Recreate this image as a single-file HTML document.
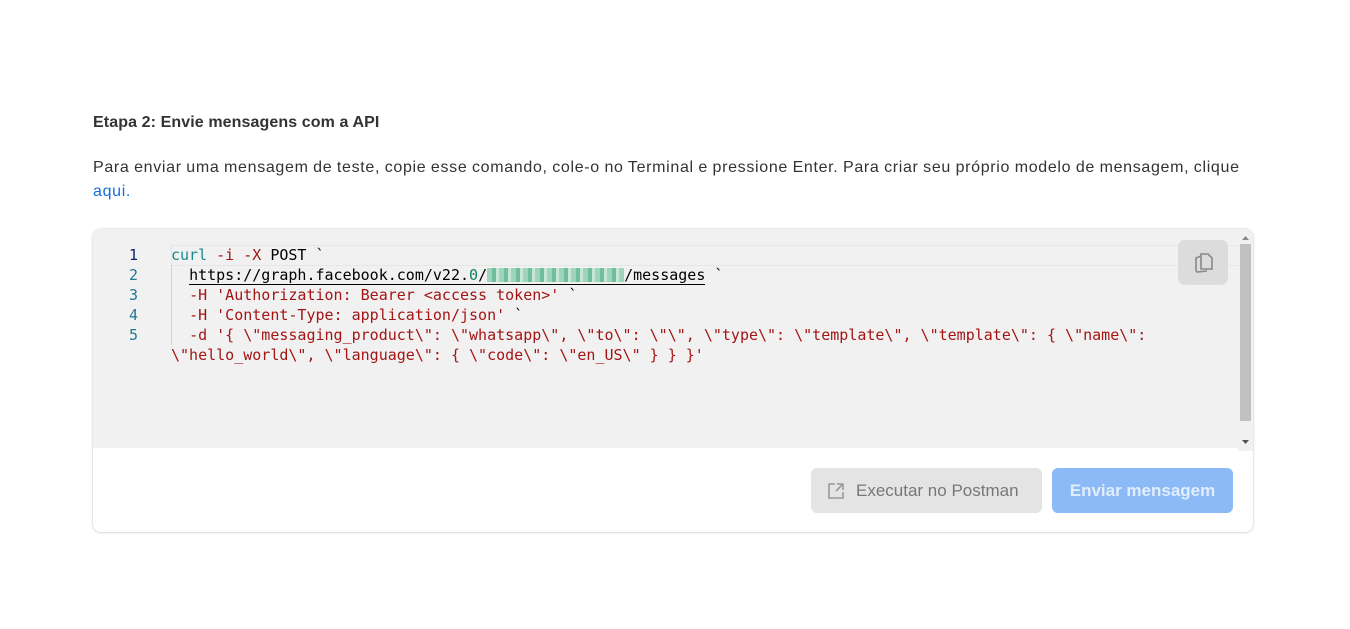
<!DOCTYPE html>
<html><head><meta charset="utf-8"><style>
body{margin:0;background:#fff;font-family:"Liberation Sans",Roboto,sans-serif;width:1350px;height:629px;overflow:hidden;position:relative}
.h{position:absolute;left:93px;top:114px;font-size:16px;font-weight:bold;color:#333;letter-spacing:0.1px}
.p{position:absolute;left:93px;top:156px;width:1220px;font-size:16px;line-height:24px;color:#333;letter-spacing:0.67px;word-spacing:-0.5px}
.p a{color:#1a6ed8;text-decoration:none}
.card{position:absolute;left:93px;top:229px;width:1160px;height:303px;border-radius:8px;box-shadow:0 0 2px rgba(0,0,0,.2),0 1px 3px rgba(0,0,0,.08);background:#fff;overflow:hidden}
.code{position:absolute;left:0;top:0;width:1145px;height:219px;background:#f1f1f1}
.hl{position:absolute;left:78px;top:16px;width:1067px;height:19px;border:1px solid #e6e6e6;border-right:none}
.ln{position:absolute;left:30px;top:16px;font:15px/20px "DejaVu Sans Mono",monospace;color:#237893;text-align:right;width:15px}
.src{position:absolute;left:78px;top:16px;font:15px/20px "DejaVu Sans Mono",monospace;color:#000;white-space:pre}
.g{color:#098658}.r{color:#a31515}.t{color:#1b8a8a}
.u{border-bottom:1px solid #000}
.tok{display:inline-block;width:137px;height:14px;vertical-align:-2px;background:repeating-linear-gradient(90deg,#9fd3bb 0 5px,#6fbf9c 5px 9px,#c6e6d6 9px 12px)}
.guide{position:absolute;left:78px;top:36px;width:1px;height:80px;background:#d3d3d3}
.sb{position:absolute;left:1145px;top:0;width:15px;height:222px;background:#f1f1f1}
.sb .th{position:absolute;left:2px;top:15px;width:11px;height:177px;background:#c1c1c1}
.copy{position:absolute;left:1085px;top:11px;width:50px;height:45px;border-radius:7px;background:#dcdcdc}
.b1{position:absolute;left:718px;top:239px;width:231px;height:45px;border-radius:6px;background:#e4e4e4;color:#777;font-size:17px;line-height:45px}
.b2{position:absolute;left:959px;top:239px;width:181px;height:45px;border-radius:6px;background:#8cbaf7;color:#e2eefd;font-size:17px;font-weight:bold;line-height:45px;text-align:center}
</style></head><body>
<div class="h">Etapa 2: Envie mensagens com a API</div>
<div class="p">Para enviar uma mensagem de teste, copie esse comando, cole-o no Terminal e pressione Enter. Para criar seu próprio modelo de mensagem, clique<br><a>aqui.</a></div>
<div class="card">
<div class="code">
<div class="hl"></div>
<div class="ln"><span style="color:#0b216f">1</span><br>2<br>3<br>4<br>5</div>
<div class="guide"></div>
<div class="src"><span class="t">curl</span> <span class="r">-i</span> <span class="r">-X</span> POST `
  <span class="u">https://graph.facebook.com/v22.<span class="g">0</span>/<span class="tok"></span>/messages</span> `
  <span class="r">-H 'Authorization: Bearer &lt;access token&gt;'</span> `
  <span class="r">-H 'Content-Type: application/json'</span> `
  <span class="r">-d '{ \"messaging_product\": \"whatsapp\", \"to\": \"\", \"type\": \"template\", \"template\": { \"name\":</span>
<span class="r">\"hello_world\", \"language\": { \"code\": \"en_US\" } } }'</span></div>
<div class="copy"><svg width="50" height="45" viewBox="0 0 50 45"><g fill="none" stroke="#888" stroke-width="1.6"><path d="M18 31V18l5-2"/><path d="M23 14h7l4 4v11h-11z"/><path d="M18 31l1 1 10-1"/></g></svg></div>
</div>
<div class="sb"><svg width="15" height="222"><path d="M4 11l3.5-4 3.5 4z" fill="#888"/><path d="M4 211l3.5 4 3.5-4z" fill="#555"/></svg><div class="th"></div></div>
<div class="b1"><svg style="position:absolute;left:15px;top:13px" width="20" height="20" viewBox="0 0 20 20"><g fill="none" stroke="#999" stroke-width="1.6"><path d="M9 3H3v14h14v-6"/><path d="M11 3h6v6M17 3l-7 7"/></g></svg><span style="position:absolute;left:45px">Executar no Postman</span></div>
<div class="b2">Enviar mensagem</div>
</div>
</body></html>
